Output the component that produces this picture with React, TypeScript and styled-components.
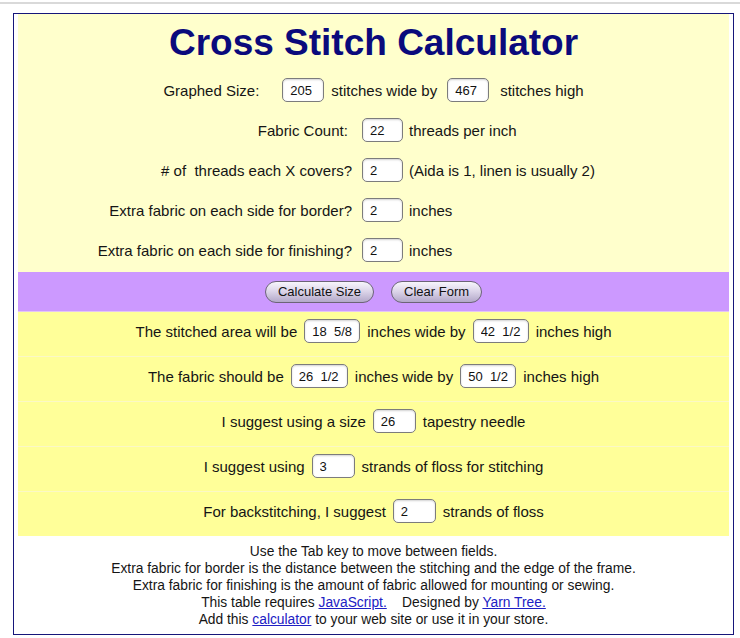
import React from 'react'
import styled, { createGlobalStyle } from 'styled-components'

const GlobalStyle = createGlobalStyle`
  body {
    margin: 0;
    background: #fff;
    font-family: "Liberation Sans", Arial, Helvetica, sans-serif;
    color: #151515;
  }
`

const TopRule = styled.div`
  margin-top: 2px;
  height: 2px;
  background: #d9d9d9;
`

const Frame = styled.div`
  box-sizing: border-box;
  margin: 9px 0 0 13px;
  width: 721px;
  border: 1px solid #16167a;
  padding: 0 4px;
`

const InputPanel = styled.div`
  background: #ffffcc;
  padding-bottom: 2px;
`

const Title = styled.h1`
  margin: 0;
  height: 56px;
  padding-top: 2px;
  box-sizing: border-box;
  line-height: 54px;
  text-align: center;
  font-size: 37px;
  font-weight: bold;
  color: #0a0a7c;
`

const FieldGrid = styled.div`
  display: grid;
  grid-template-columns: 334px 1fr;
  column-gap: 10px;
  grid-auto-rows: 40px;
  font-size: 15px;
`

const Label = styled.div`
  display: flex;
  align-items: center;
  justify-content: flex-end;
  white-space: pre;
`

const Field = styled.div`
  display: flex;
  align-items: center;
  white-space: pre;
`

const WideRow = styled.div`
  grid-column: 1 / span 2;
  display: flex;
  align-items: center;
  justify-content: center;
  white-space: pre;
`

const Box = styled.input<{ $w?: number; $ml?: number; $mr?: number }>`
  box-sizing: border-box;
  width: ${p => p.$w ?? 41}px;
  height: 24px;
  margin: 0 ${p => p.$mr ?? 7}px 0 ${p => p.$ml ?? 7}px;
  padding: 0 0 0 7px;
  border: 1px solid #7c7c7c;
  border-radius: 5px;
  background: #fff;
  box-shadow: inset 0 1px 2px rgba(0, 0, 0, 0.18);
  font-family: "Liberation Sans", Arial, sans-serif;
  font-size: 13px;
  color: #111;
  outline: none;
`

const ButtonBar = styled.div`
  height: 39px;
  background: #cc99ff;
  border-bottom: 1px solid #e4c6f4;
  display: flex;
  align-items: center;
  justify-content: center;
  gap: 17px;
`

const PillButton = styled.button`
  height: 22px;
  padding: 0 12px;
  border: 1px solid #6c6478;
  border-radius: 11px;
  background: linear-gradient(to bottom, #f7f5fb 0%, #ddd6ea 45%, #b3a8c9 100%);
  font-family: "Liberation Sans", Arial, sans-serif;
  font-size: 13px;
  color: #111;
  line-height: 20px;
`

const ResultPanel = styled.div`
  background: #ffff99;
`

// rows sit a little above the middle of their cell
const ResultRow = styled.div`
  height: 38px;
  padding-bottom: 6px;
  display: flex;
  align-items: center;
  justify-content: center;
  font-size: 15px;
  white-space: pre;
  & + & {
    border-top: 1px solid #fbf8c6;
  }
`

const Notes = styled.div`
  height: 98px;
  box-sizing: border-box;
  padding-top: 7px;
  text-align: center;
  font-size: 13.8px;
  line-height: 17px;
  color: #151515;
`

const NoteLink = styled.a`
  color: #2020c4;
  text-decoration: underline;
`

const fields = [
  { label: 'Fabric Count: ', value: '22', after: 'threads per inch' },
  { label: '# of  threads each X covers?', value: '2', after: '(Aida is 1, linen is usually 2)' },
  { label: 'Extra fabric on each side for border?', value: '2', after: 'inches' },
  { label: 'Extra fabric on each side for finishing?', value: '2', after: 'inches' },
]

export default function App() {
  return (
    <>
      <GlobalStyle />
      <TopRule />
      <Frame>
        <InputPanel>
          <Title>Cross Stitch Calculator</Title>
          <FieldGrid>
            <WideRow>
              Graphed Size:
              <Box defaultValue="205" $ml={23} $w={42} />
              stitches wide by
              <Box defaultValue="467" $ml={10} $mr={11} $w={42} />
              stitches high
            </WideRow>
            {fields.map(f => (
              <React.Fragment key={f.label}>
                <Label>{f.label}</Label>
                <Field>
                  <Box defaultValue={f.value} $ml={0} $mr={6} />
                  {f.after}
                </Field>
              </React.Fragment>
            ))}
          </FieldGrid>
        </InputPanel>

        <ButtonBar>
          <PillButton>Calculate Size</PillButton>
          <PillButton>Clear Form</PillButton>
        </ButtonBar>

        <ResultPanel>
          <ResultRow>
            The stitched area will be
            <Box readOnly value="18  5/8" $w={56} />
            inches wide by
            <Box readOnly value="42  1/2" $w={56} />
            inches high
          </ResultRow>
          <ResultRow>
            The fabric should be
            <Box readOnly value="26  1/2" $w={57} />
            inches wide by
            <Box readOnly value="50  1/2" $w={56} />
            inches high
          </ResultRow>
          <ResultRow>
            I suggest using a size
            <Box readOnly value="26" $w={43} />
            tapestry needle
          </ResultRow>
          <ResultRow>
            I suggest using
            <Box readOnly value="3" $w={43} />
            strands of floss for stitching
          </ResultRow>
          <ResultRow>
            For backstitching, I suggest
            <Box readOnly value="2" $w={43} />
            strands of floss
          </ResultRow>
        </ResultPanel>

        <Notes>
          Use the Tab key to move between fields.
          <br />
          Extra fabric for border is the distance between the stitching and the edge of the frame.
          <br />
          Extra fabric for finishing is the amount of fabric allowed for mounting or sewing.
          <br />
          This table requires <NoteLink href="#">JavaScript.</NoteLink>
          {'\u00a0\u00a0\u00a0 '}Designed by <NoteLink href="#">Yarn Tree.</NoteLink>
          <br />
          Add this <NoteLink href="#">calculator</NoteLink> to your web site or use it in your store.
        </Notes>
      </Frame>
    </>
  )
}
